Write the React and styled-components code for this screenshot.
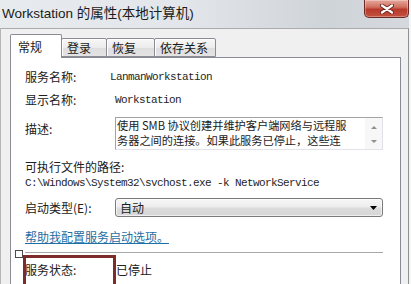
import React from 'react';
import styled, { createGlobalStyle } from 'styled-components';

const Global = createGlobalStyle`
  html, body { margin: 0; padding: 0; background: #f3f4f5; overflow: hidden; }
  #root { width: 411px; height: 284px; }
`;

const cjk = `"Noto Sans CJK SC", "Noto Sans", sans-serif`;
const mono = `"Liberation Mono", "Noto Sans CJK SC", monospace`;

const Window = styled.div`
  width: 409px;
  height: 284px;
  overflow: hidden;
  display: flex;
  flex-direction: column;
  background: #f0f0f0;
`;

const TitleBar = styled.div`
  height: 28px;
  flex: none;
  display: flex;
  align-items: flex-start;
  justify-content: space-between;
  background: linear-gradient(to right, #e8ebee 0%, #e2e6ea 45%, #cfd4d9 80%, #d5d9dd 100%);
`;

const Title = styled.div`
  font-family: "Liberation Sans", "Noto Sans CJK SC", sans-serif;
  font-size: 13.5px;
  color: #1b1b1b;
  line-height: 28px;
  padding-left: 2px;
  white-space: nowrap;
`;

const CloseButton = styled.div`
  width: 45px;
  height: 18px;
  box-sizing: border-box;
  border: 1px solid #6b2a24;
  border-top: none;
  border-radius: 0 0 5px 5px;
  background: linear-gradient(#e6a89c 0%, #d0705f 42%, #b83a2b 55%, #c4513f 100%);
  box-shadow: inset 0 0 0 1px rgba(255, 255, 255, 0.3);
  display: flex;
  align-items: center;
  justify-content: center;
`;

const Client = styled.div`
  flex: 1;
  border-top: 1px solid #a9abad;
  border-left: 1px solid #b5b5b5;
  border-right: 1px solid #8f9092;
  padding: 5px 7px 0 9px;
  display: flex;
  flex-direction: column;
`;

const TabRow = styled.div`
  display: flex;
  align-items: flex-end;
  height: 24px;
  position: relative;
  z-index: 1;
  margin-bottom: -1px;
`;

const Tab = styled.div`
  box-sizing: border-box;
  width: ${(p) => p.$w}px;
  height: ${(p) => (p.$active ? 24 : 19)}px;
  margin-bottom: ${(p) => (p.$active ? 0 : 1)}px;
  margin-left: ${(p) => (p.$first ? 0 : -1)}px;
  position: relative;
  z-index: ${(p) => (p.$active ? 2 : 1)};
  border: 1px solid #898c95;
  border-bottom: ${(p) => (p.$active ? 'none' : '1px solid #898c95')};
  border-radius: 2px 2px 0 0;
  background: ${(p) =>
    p.$active ? '#ffffff' : 'linear-gradient(#f7f7f7 0%, #ececec 50%, #dedede 51%, #e4e4e4 100%)'};
  box-shadow: ${(p) => (p.$active ? 'none' : 'inset 1px 1px 0 #ffffff')};
  font-family: ${cjk};
  font-size: 12px;
  color: #1a1a1a;
  display: flex;
  align-items: center;
  padding-left: ${(p) => (p.$active ? 7 : 5)}px;
  white-space: nowrap;
`;

const Panel = styled.div`
  flex: 1;
  background: #ffffff;
  border: 1px solid #898c95;
  border-bottom: none;
  padding: 9px 17px 0 14px;
  display: flex;
  flex-direction: column;
`;

const Row = styled.div`
  display: grid;
  grid-template-columns: ${(p) => p.$label || 85}px 1fr;
  align-items: ${(p) => (p.$top ? 'start' : 'center')};
  height: ${(p) => (p.$h ? `${p.$h}px` : 'auto')};
  margin-top: ${(p) => p.$mt || 0}px;
  position: relative;
`;

const Label = styled.div`
  font-family: ${cjk};
  font-size: 12px;
  line-height: 16px;
  color: #202020;
  white-space: nowrap;
  padding-top: ${(p) => p.$pt || 0}px;
  margin-top: ${(p) => p.$mt || 0}px;
`;

const MonoValue = styled.div`
  font-family: ${mono};
  font-size: 11px;
  letter-spacing: -0.6px;
  line-height: 14px;
  color: #1e1e1e;
  white-space: nowrap;
  padding-left: ${(p) => p.$pl || 0}px;
  margin-top: ${(p) => p.$mt || 0}px;
`;

const TextBox = styled.div`
  margin-left: 5px;
  height: 33px;
  box-sizing: border-box;
  border: 1px solid #e2e3ea;
  border-top-color: #a3a3a3;
  border-left-color: #a3a3a3;
  display: flex;
  background: #fff;
`;

const TextBody = styled.div`
  flex: 1;
  min-width: 0;
  overflow: hidden;
  font-family: ${cjk};
  font-size: 11.2px;
  color: #1a1a1a;
  padding: 0 0 0 1px;
  white-space: nowrap;
`;

const TextLine = styled.div`
  height: 15px;
  line-height: 15px;
`;

const ScrollBar = styled.div`
  width: 17px;
  flex: none;
  background: #f7f7f7;
  display: flex;
  flex-direction: column;
  align-items: center;
  justify-content: space-between;
  padding: 8px 0 6px;
  box-sizing: border-box;
`;

const Select = styled.div`
  margin-left: 5px;
  height: 19px;
  box-sizing: border-box;
  border: 1px solid #7a7a7a;
  border-radius: 3px;
  background: linear-gradient(#f7f7f7 0%, #ececec 48%, #dcdcdc 52%, #d6d6d6 100%);
  box-shadow: inset 0 0 0 1px rgba(255, 255, 255, 0.6);
  display: flex;
  align-items: center;
  justify-content: space-between;
  padding: 0 5px 0 4px;
  font-family: ${cjk};
  font-size: 12px;
  color: #1a1a1a;
`;

const HelpLink = styled.a`
  font-family: ${cjk};
  font-size: 12px;
  line-height: 16px;
  color: #1d6fa5;
  text-decoration: underline;
  margin-top: 12px;
  align-self: flex-start;
  cursor: pointer;
`;

const Separator = styled.div`
  height: 1px;
  background: #a8a8a8;
  margin-top: 7px;
`;

const StatusValue = styled.div`
  font-family: ${cjk};
  font-size: 12px;
  line-height: 16px;
  color: #202020;
`;

const Annotation = styled.div`
  position: absolute;
  top: -7px;
  left: -2px;
  width: 93px;
  height: 40px;
  box-sizing: border-box;
  border: 3px solid #7d2b2b;
  pointer-events: none;
`;

const Handle = styled.div`
  position: absolute;
  top: -12px;
  left: -10px;
  width: 8px;
  height: 8px;
  box-sizing: border-box;
  border: 1px solid #4a4a4a;
  background: #fff;
`;

const Triangle = ({ up, color = '#000', w = 7, h = 4 }) => (
  <svg width={w} height={h} viewBox={`0 0 ${w} ${h}`}>
    <path d={up ? `M0 ${h} L${w / 2} 0 L${w} ${h} Z` : `M0 0 L${w} 0 L${w / 2} ${h} Z`} fill={color} />
  </svg>
);

export default function App() {
  return (
    <>
      <Global />
      <Window>
        <TitleBar>
          <Title>Workstation 的属性(本地计算机)</Title>
          <CloseButton>
            <svg width="14" height="10" viewBox="0 0 14 10">
              <path d="M2 1.5 L12 8.5 M12 1.5 L2 8.5" stroke="#6a2119" strokeWidth="4" strokeLinecap="round" />
              <path d="M2 1.5 L12 8.5 M12 1.5 L2 8.5" stroke="#ffffff" strokeWidth="2.3" strokeLinecap="round" />
            </svg>
          </CloseButton>
        </TitleBar>
        <Client>
          <TabRow>
            <Tab $w={52} $active $first>常规</Tab>
            <Tab $w={46}>登录</Tab>
            <Tab $w={49}>恢复</Tab>
            <Tab $w={62}>依存关系</Tab>
          </TabRow>
          <Panel>
            <Row $h={20}>
              <Label>服务名称:</Label>
              <MonoValue>LanmanWorkstation</MonoValue>
            </Row>
            <Row $h={20} $mt={3}>
              <Label>显示名称:</Label>
              <MonoValue $pl={5}>Workstation</MonoValue>
            </Row>
            <Row $top $mt={7}>
              <Label $pt={4}>描述:</Label>
              <TextBox>
                <TextBody>
                  <TextLine>使用 SMB 协议创建并维护客户端网络与远程服</TextLine>
                  <TextLine>务器之间的连接。如果此服务已停止，这些连</TextLine>
                </TextBody>
                <ScrollBar>
                  <Triangle up color="#8f8f8f" w={6} h={3} />
                  <Triangle color="#8f8f8f" w={6} h={3} />
                </ScrollBar>
              </TextBox>
            </Row>
            <Label $mt={9}>可执行文件的路径:</Label>
            <MonoValue $mt={1}>C:\Windows\System32\svchost.exe -k NetworkService</MonoValue>
            <Row $mt={8}>
              <Label>启动类型(E):</Label>
              <Select>
                <span>自动</span>
                <Triangle />
              </Select>
            </Row>
            <HelpLink>帮助我配置服务启动选项。</HelpLink>
            <Separator />
            <Row $label={91} $mt={9}>
              <Label>服务状态:</Label>
              <StatusValue>已停止</StatusValue>
              <Handle />
              <Annotation />
            </Row>
          </Panel>
        </Client>
      </Window>
    </>
  );
}
